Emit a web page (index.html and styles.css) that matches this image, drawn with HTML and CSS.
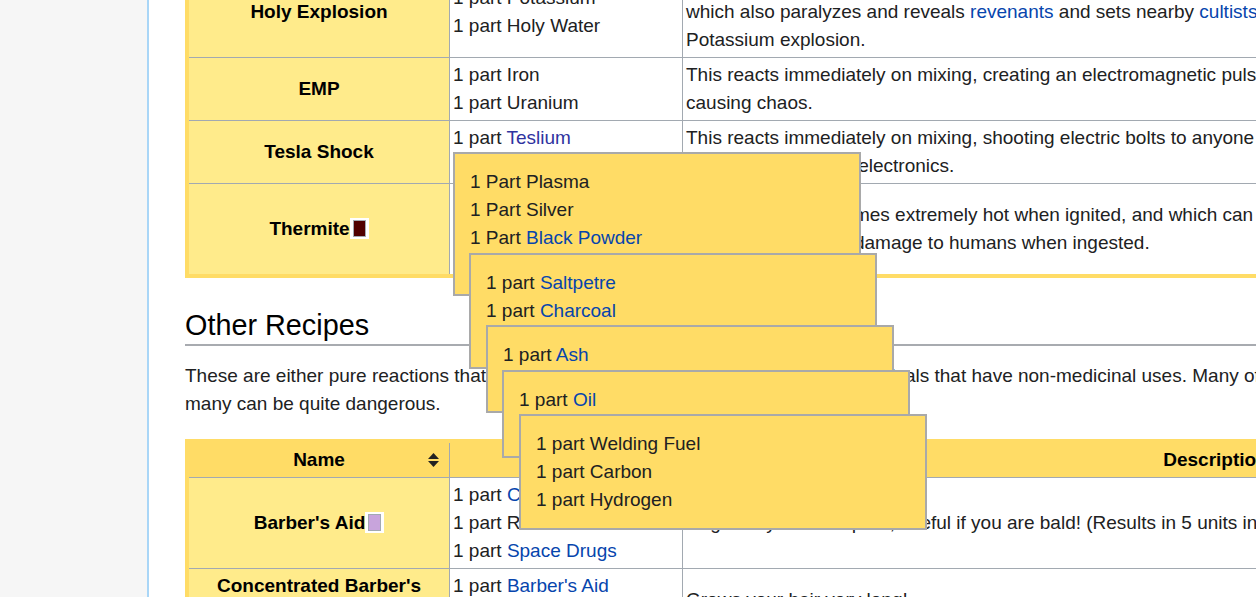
FILE: index.html
```html
<!DOCTYPE html>
<html lang="en">
<head>
<meta charset="utf-8">
<title>Other Recipes</title>
<link rel="stylesheet" href="styles.css">
</head>
<body>
<div class="page">
  <aside class="sidebar"></aside>
  <main class="content">
    <table class="recipes recipes-top">
      <colgroup><col class="w-name"><col class="w-parts"><col class="w-desc"></colgroup>
      <tbody>
        <tr>
          <th>Holy Explosion</th>
          <td>1 part Potassium<br>1 part Holy Water</td>
          <td>Causes a powerful explosion that deals extra damage to cult constructs and other unholy creatures,<br>which also paralyzes and reveals <a href="#">revenants</a> and sets nearby <a href="#">cultists</a> on fire. Otherwise identical to a regular<br>Potassium explosion.</td>
        </tr>
        <tr>
          <th>EMP</th>
          <td>1 part Iron<br>1 part Uranium</td>
          <td>This reacts immediately on mixing, creating an electromagnetic pulse that disables nearby electronics,<br>causing chaos.</td>
        </tr>
        <tr>
          <th>Tesla Shock</th>
          <td>1 part <a class="visited" href="#">Teslium</a><br>1 part Liquid Electricity</td>
          <td>This reacts immediately on mixing, shooting electric bolts to anyone in range, stunning them<br>and zapping nearby electronics.</td>
        </tr>
        <tr>
          <th><span class="nowrap">Thermite<span class="swatch swatch-thermite"><i></i></span></span></th>
          <td>1 part Aluminium<br>1 part Iron<br>1 part Oxygen</td>
          <td>A mixture, that becomes extremely hot when ignited, and which can burn straight through walls. It can also<br>cause horrible burn damage to humans when ingested.</td>
        </tr>
      </tbody>
    </table>

    <h2 class="section-title">Other Recipes</h2>
    <p class="intro">These are either pure reactions that can be used to produce helpful effects, or chemicals that have non-medicinal uses. Many of them are just for fun, and<br>many can be quite dangerous.</p>

    <table class="recipes">
      <colgroup><col class="w-name"><col class="w-parts"><col class="w-desc"></colgroup>
      <thead>
        <tr>
          <th class="sortable">Name<svg class="sort-icon" viewBox="0 0 11 14" width="11" height="14" aria-hidden="true"><polygon points="5.5,0 11,6 0,6"/><polygon points="0,8 11,8 5.5,14"/></svg></th>
          <th class="sortable">Recipe<svg class="sort-icon" viewBox="0 0 11 14" width="11" height="14" aria-hidden="true"><polygon points="5.5,0 11,6 0,6"/><polygon points="0,8 11,8 5.5,14"/></svg></th>
          <th class="sortable">Description<svg class="sort-icon" viewBox="0 0 11 14" width="11" height="14" aria-hidden="true"><polygon points="5.5,0 11,6 0,6"/><polygon points="0,8 11,8 5.5,14"/></svg></th>
        </tr>
      </thead>
      <tbody>
        <tr>
          <th>Barber's <span class="nowrap">Aid<span class="swatch swatch-barber"><i></i></span></span></th>
          <td>1 part <a href="#">Carpet</a><br>1 part Radium<br>1 part <a href="#">Space Drugs</a></td>
          <td>Regrows your hair quick, useful if you are bald! (Results in 5 units instead of 3)</td>
        </tr>
        <tr>
          <th>Concentrated Barber's <span class="nowrap">Aid<span class="swatch swatch-conc"><i></i></span></span></th>
          <td>1 part <a href="#">Barber's Aid</a><br>1 part Unstable Mutagen</td>
          <td>Grows your hair very long!</td>
        </tr>
      </tbody>
    </table>
  </main>

  <div class="tip tip-1">
    <div>1 Part Plasma</div>
    <div>1 Part Silver</div>
    <div>1 Part <a href="#">Black Powder</a></div>
    <div>Heat to 250K</div>
  </div>
  <div class="tip tip-2">
    <div>1 part <a href="#">Saltpetre</a></div>
    <div>1 part <a href="#">Charcoal</a></div>
    <div>1 part Sulfur</div>
  </div>
  <div class="tip tip-3">
    <div>1 part <a href="#">Ash</a></div>
    <div>1 part Sodium Chloride</div>
  </div>
  <div class="tip tip-4">
    <div>1 part <a href="#">Oil</a></div>
    <div>Heat to 480K</div>
  </div>
  <div class="tip tip-5">
    <div>1 part Welding Fuel</div>
    <div>1 part Carbon</div>
    <div>1 part Hydrogen</div>
  </div>
</div>
</body>
</html>
```

FILE: styles.css
```css
html, body {
  margin: 0;
  padding: 0;
  overflow: hidden;
  background: #ffffff;
}

body {
  font-family: "Liberation Sans", Arial, sans-serif;
  font-size: 19px;
  line-height: 28px;
  color: #202122;
}

a {
  color: #0645ad;
  text-decoration: none;
}

a.visited {
  color: #2f339f;
}

.nowrap {
  white-space: nowrap;
}

.page {
  position: relative;
  display: flex;
  height: 597px;
  overflow: hidden;
}

.sidebar {
  flex: none;
  width: 147px;
  background: #f6f6f6;
  border-right: 2px solid #a9d6f7;
}

.content {
  flex: none;
  width: 1800px;
  padding-left: 36px;
  background: #ffffff;
}

/* tables */
.recipes {
  table-layout: fixed;
  width: 1567px;
  border: 4px solid #ffdc66;
  border-spacing: 0;
  background: #ffffff;
}

.recipes-top {
  margin-top: -37px;
}

.w-name { width: 260px; }
.w-parts { width: 233px; }
.w-desc { width: 1066px; }

.recipes td,
.recipes th {
  padding: 3px;
  border-top: 1px solid #a2a9b1;
  border-left: 1px solid #a2a9b1;
  vertical-align: middle;
}

.recipes tr:first-child > * {
  border-top: 0;
}

.recipes thead + tbody > tr:first-child > * {
  border-top: 1px solid #a2a9b1;
}

.recipes tr > :first-child {
  border-left: 0;
}

.recipes td {
  text-align: left;
  white-space: nowrap;
}

.recipes th {
  font-weight: bold;
  color: #000000;
  text-align: center;
}

.recipes tbody th {
  background: #ffeb8b;
}

.recipes thead th {
  background: #ffdc66;
}

.sortable {
  position: relative;
  padding-right: 33px;
}

.sort-icon {
  position: absolute;
  right: 10px;
  top: 50%;
  margin-top: -7px;
  fill: #222222;
}

.swatch {
  display: inline-block;
  background: #ffffff;
  padding: 2px 3px;
  line-height: 0;
  vertical-align: middle;
  position: relative;
  top: -1px;
}

.swatch i {
  display: inline-block;
  width: 11px;
  height: 15px;
  border: 1px solid #a2a9b1;
}

.swatch-thermite i { background: #500000; }
.swatch-barber i { background: #c8a4dc; }
.swatch-conc i { background: #b98ad2; }

/* heading + intro */
.section-title {
  margin: 29px 0 0 0;
  padding: 0;
  font-family: "Liberation Sans", Arial, sans-serif;
  font-size: 28.8px;
  font-weight: normal;
  line-height: 37px;
  color: #000000;
  border-bottom: 2px solid #a8abb0;
}

.intro {
  margin: 16px 0 0 0;
  white-space: nowrap;
}

.recipes + .section-title + .intro + .recipes {
  margin-top: 21px;
}

/* tooltips */
.tip {
  position: absolute;
  box-sizing: border-box;
  width: 408px;
  padding: 14px 15px;
  background: #ffdc66;
  border: 2px solid #a9a9a9;
  color: #202122;
  white-space: nowrap;
  overflow: hidden;
}

.tip-1 { left: 453px; top: 152px; }
.tip-2 { left: 469px; top: 253px; }
.tip-3 { left: 486px; top: 325px; }
.tip-4 { left: 502px; top: 370px; }
.tip-5 { left: 519px; top: 414px; }
```
